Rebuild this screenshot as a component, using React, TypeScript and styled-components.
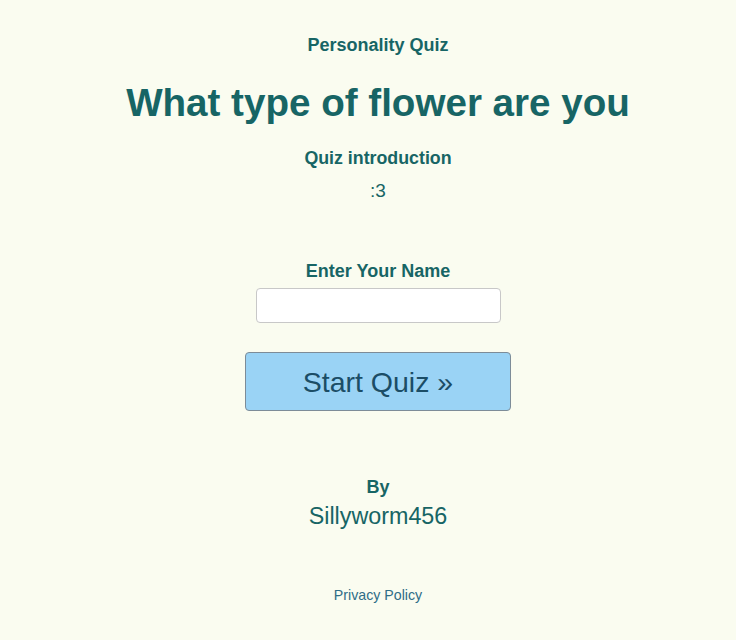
import React, { useState } from 'react';
import styled, { createGlobalStyle } from 'styled-components';

const GlobalStyle = createGlobalStyle`
  html, body {
    margin: 0;
    padding: 0;
    background: #fafcf0;
  }
  body {
    font-family: 'Liberation Sans', Arial, sans-serif;
    color: #176565;
  }
`;

const Page = styled.main`
  min-height: 640px;
  display: flex;
  flex-direction: column;
  align-items: center;
  padding: 34px 0 0 20px;
  box-sizing: border-box;
`;

const Kicker = styled.div`
  font-size: 18px;
  font-weight: 700;
  line-height: 22px;
`;

const Title = styled.h1`
  margin: 24px 0 0 0;
  font-size: 38.6px;
  font-weight: 700;
  line-height: 46px;
`;

const Intro = styled.div`
  margin-top: 21px;
  font-size: 17.8px;
  font-weight: 700;
  line-height: 22px;
`;

const Face = styled.div`
  margin-top: 10px;
  font-size: 19px;
  line-height: 24px;
`;

const Label = styled.label`
  margin-top: 57px;
  font-size: 18px;
  font-weight: 700;
  line-height: 22px;
`;

const NameInput = styled.input`
  margin-top: 6px;
  width: 245px;
  height: 35px;
  box-sizing: border-box;
  border: 1px solid #c8c8c8;
  border-radius: 4px;
  background: #ffffff;
  font-family: inherit;
  font-size: 16px;
  padding: 0 8px;
  outline: none;
`;

const StartButton = styled.button`
  margin-top: 29px;
  width: 266px;
  height: 59px;
  box-sizing: border-box;
  background: #9ad3f5;
  border: 1px solid #7d8c98;
  border-radius: 4px;
  color: #1b4d66;
  font-family: inherit;
  font-size: 28.5px;
  padding-top: 2px;
  cursor: pointer;
`;

const ByLabel = styled.div`
  margin-top: 65px;
  font-size: 18px;
  font-weight: 700;
  line-height: 22px;
`;

const Author = styled.div`
  margin-top: 4px;
  font-size: 23.3px;
  line-height: 28px;
`;

const Footer = styled.a`
  margin-top: 55px;
  font-size: 14.2px;
  line-height: 20px;
  color: #2f6d87;
  text-decoration: none;
`;

export default function App() {
  const [name, setName] = useState('');

  return (
    <>
      <GlobalStyle />
      <Page>
        <Kicker>Personality Quiz</Kicker>
        <Title>What type of flower are you</Title>
        <Intro>Quiz introduction</Intro>
        <Face>:3</Face>
        <Label htmlFor="name">Enter Your Name</Label>
        <NameInput id="name" value={name} onChange={(e) => setName(e.target.value)} />
        <StartButton>Start Quiz »</StartButton>
        <ByLabel>By</ByLabel>
        <Author>Sillyworm456</Author>
        <Footer href="#">Privacy Policy</Footer>
      </Page>
    </>
  );
}
